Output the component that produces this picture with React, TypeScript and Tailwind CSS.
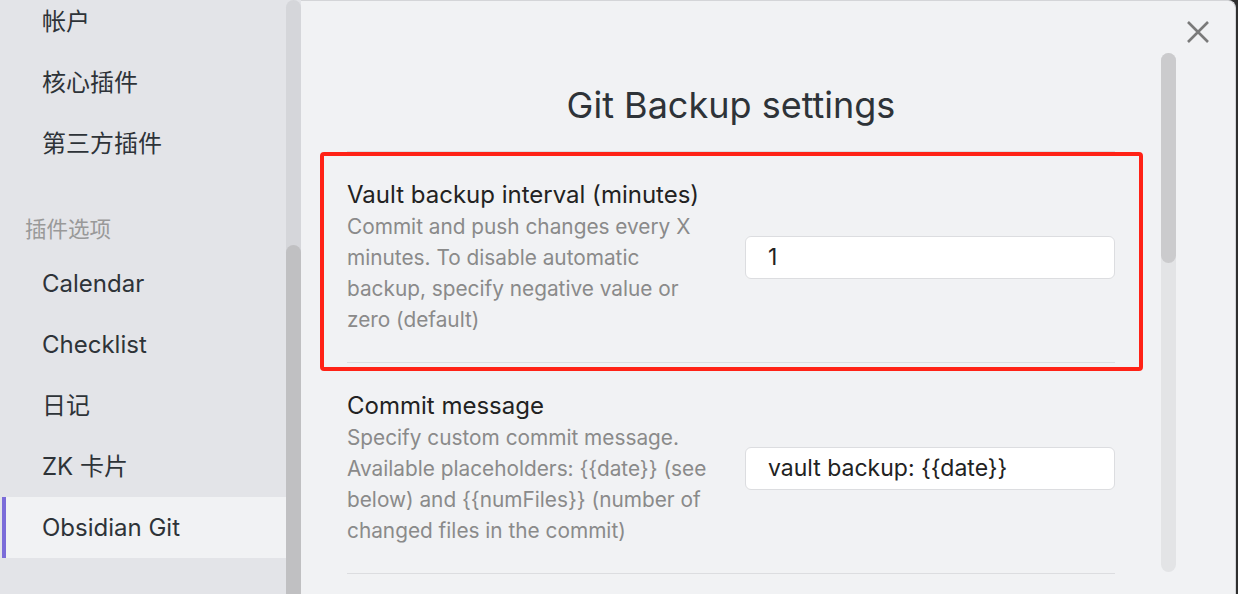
import React from 'react';

interface NavItem {
    label: string;
    active?: boolean;
}

const topItems: NavItem[] = [
    { label: '帐户' },
    { label: '核心插件' },
    { label: '第三方插件' },
];

const pluginItems: NavItem[] = [
    { label: 'Calendar' },
    { label: 'Checklist' },
    { label: '日记' },
    { label: 'ZK 卡片' },
    { label: 'Obsidian Git', active: true },
];

function NavRow({ item }: { item: NavItem }) {
    return (
        <div
            className={`flex h-[61px] items-center text-[24px] text-[#2e3338] ${item.active
                ? 'border-l-4 border-[#7b6cd9] bg-[#f1f2f4] pl-[36px]'
                : 'pl-[40px]'
                }`}
        >
            {item.label}
        </div>
    );
}

function SettingItem({ name, desc, value }: { name: string; desc: string; value: string }) {
    return (
        <div className="flex items-center border-t border-[#dcdde0] py-[27px]">
            <div className="w-[372px] shrink-0">
                <div className="text-[24px] leading-[32px] text-[#222222]">{name}</div>
                <div className="text-[20.8px] leading-[31px] text-[#8a8a8a]">{desc}</div>
            </div>
            <div className="ml-auto">
                <input
                    readOnly
                    value={value}
                    className="h-[43px] w-[370px] rounded-[6px] border-[1.5px] border-[#dcdde0] bg-white pl-[22px] text-[23px] text-[#222222] outline-none"
                />
            </div>
        </div>
    );
}

export default function App() {
    return (
        <div className="flex h-[594px] w-[1238px] overflow-hidden bg-[#2f2f2f] font-['Inter','Noto_Sans_CJK_SC',sans-serif]">
            {/* Sidebar */}
            <div className="flex w-[301px] shrink-0 bg-[#e3e4e8]">
                <div className="-mt-[9px] w-[286px] pl-[2px]">
                    {topItems.map(item => <NavRow key={item.label} item={item} />)}
                    <div className="h-[79px] pl-[23px] pt-[40px] text-[21.5px] leading-[30px] text-[#999999]">
                        插件选项
                    </div>
                    {pluginItems.map(item => <NavRow key={item.label} item={item} />)}
                </div>
                {/* sidebar scrollbar */}
                <div className="flex w-[15px] flex-col rounded-t-full bg-[#d5d6da]">
                    <div className="h-[245px]" />
                    <div className="flex-1 rounded-t-full bg-[#c0c0c2]" />
                </div>
            </div>

            {/* Settings panel */}
            <div className="relative mr-[2px] flex flex-1 overflow-hidden rounded-tr-[8px] border-r border-t border-[#d4d5d8] bg-[#f1f2f4]">
                <div className="ml-[46px] w-[768px] shrink-0 pt-[82px]">
                    <h2 className="mb-[24px] text-center text-[36px] leading-[44px] text-[#2e3338]">
                        Git Backup settings
                    </h2>
                    <SettingItem
                        name="Vault backup interval (minutes)"
                        desc="Commit and push changes every X minutes. To disable automatic backup, specify negative value or zero (default)"
                        value="1"
                    />
                    <SettingItem
                        name="Commit message"
                        desc="Specify custom commit message. Available placeholders: {{date}} (see below) and {{numFiles}} (number of changed files in the commit)"
                        value="vault backup: {{date}}"
                    />
                    <div className="border-t border-[#dcdde0]" />
                </div>

                {/* content scrollbar */}
                <div className="ml-[46px] mt-[52px] h-[519px] w-[15px] shrink-0 rounded-full bg-[#e3e4e6]">
                    <div className="h-[210px] rounded-full bg-[#cbcbcd]" />
                </div>

                {/* close */}
                <div className="ml-[11px] pt-[20px]">
                    <svg width="22" height="22" viewBox="0 0 22 22">
                        <path d="M1 1 L21 21 M21 1 L1 21" stroke="#7a7a7a" strokeWidth="2.6" fill="none" />
                    </svg>
                </div>

                {/* highlight annotation */}
                <div className="pointer-events-none absolute left-[19px] top-[151px] h-[219px] w-[823px] rounded-[4px] border-4 border-[#ff2216]" />
            </div>
        </div>
    );
}
